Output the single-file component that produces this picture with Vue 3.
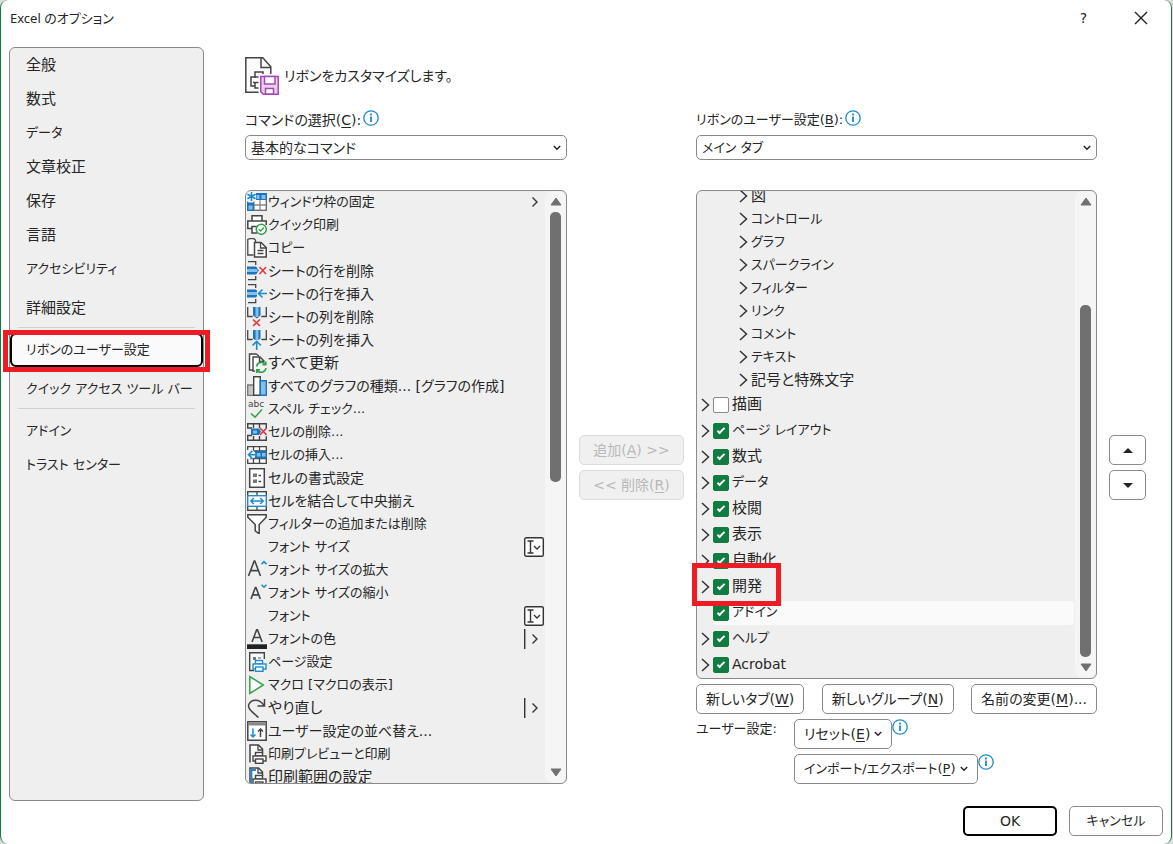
<script setup>
import { ref } from 'vue'

const sections = [
  [
    { label: '全般' },
    { label: '数式' },
    { label: 'データ' },
    { label: '文章校正' },
    { label: '保存' },
    { label: '言語' },
    { label: 'アクセシビリティ' },
    { label: '詳細設定', spaced: true },
  ],
  [{ label: 'リボンのユーザー設定', current: true }, { label: 'クイック アクセス ツール バー' }],
  [{ label: 'アドイン' }, { label: 'トラスト センター' }],
]

// Labels that are mostly katakana are set a step smaller than kanji ones.
function sizeOf(label) {
  const letters = label.match(/[ぁ-んァ-ヶー一-龠]/g) || []
  const katakana = letters.filter((ch) => /[ァ-ヶー]/.test(ch)).length
  if (letters.length === 0) return 'mid'
  if (katakana === 0) return 'large'
  return katakana / letters.length > 0.38 ? 'small' : 'mid'
}

const G = '#444'
const B = '#1e8bcd'
const page = `<path d="M3 18.500V1h8.500l4 4v4" fill="#fafafa" stroke="${G}" stroke-width="1.500"/><path d="M11 1v5h4.500" fill="none" stroke="${G}" stroke-width="1.300"/>`
const printer = (c) =>
  `<rect x="8.500" y="8.500" width="7" height="3.500" fill="#fff" stroke="${c}" stroke-width="1.400"/><rect x="6" y="12" width="13" height="5" fill="#fff" stroke="${c}" stroke-width="1.400"/><rect x="8.500" y="15" width="7.500" height="4.300" fill="#fff" stroke="${c}" stroke-width="1.400"/>`
const columns = `<path d="M.7 4v5.500h5M19.300 4v5.500h-5M.7 9V0M19.300 9V0" fill="none" stroke="${G}" stroke-width="1.300"/><path d="M6 0h7.500v8.500l-3.700 3L6 8.500z" fill="#1b75bb"/><path d="M8.500 0h3v10h-3z" fill="#83beec"/>`
const rows = `<path d="M8.700 4V.7H1M8.700 15v3.600H1" fill="none" stroke="${G}" stroke-width="1.300"/><path d="M0 5.500h9l3 4-3 4H0z" fill="#1b75bb"/><path d="M0 8h10.500v3H0z" fill="#83beec"/>`
const letterA = (x, y, s) =>
  `<path d="M${x} ${y}l${s * 0.38}-${s}h.6l${s * 0.38} ${s}M${x + s * 0.14} ${y - s * 0.36}h${s * 0.53}" fill="none" stroke="${G}" stroke-width="1.600"/>`

const icons = {
  freeze: `<rect x=".7" y="2" width="18.600" height="16.300" fill="#fff" stroke="#666" stroke-width="1.300"/><path d="M7 8v10M13 8v10M7 13h12" stroke="#888" stroke-width="1.300"/><path d="M8.500 1H20v7H8.500zM0 10.500h7v8.300H0z" fill="#1b75bb"/><path d="M9.500 3h3v4h-3zM14.500 3h4v4h-4zM1.500 13.500h4v4h-4z" fill="#83beec"/><path d="M0 0h9v9.500H0z" fill="#f4f4f4"/><path d="M4.500 0v9M.4 2.300l8.200 4.500M.4 6.800l8.200-4.500" stroke="${B}" stroke-width="1.600"/>`,
  quickPrint: `<path d="M5 6V.8h10V6M5 13.500H.8V6h18.400v4M4.500 11.500h6M5 11v7h5" fill="#fff" stroke="${G}" stroke-width="1.500"/><circle cx="14.300" cy="14.300" r="5" fill="#fff" stroke="#30a24b" stroke-width="1.500"/><path d="M11.800 14.300l1.800 1.800 3.400-3.600" fill="none" stroke="#30a24b" stroke-width="1.400"/>`,
  copy: `<path d="M6.500 17H.8V1.500L3 .7h4l1.500 1.500V4" fill="#fff" stroke="${G}" stroke-width="1.300"/><path d="M7.500 4.500H14l5.200 5V19H7.500z" fill="#fff" stroke="${G}" stroke-width="1.500"/><path d="M13.500 4.500V10H19M10.500 12.500h6M10.500 15.500h6" fill="none" stroke="${G}" stroke-width="1.300"/>`,
  rowDelete: `${rows}<path d="M12.500 6l6.500 7M19 6l-6.500 7" stroke="#e8383d" stroke-width="1.600"/>`,
  rowInsert: `${rows}<path d="M10 5h10v9H10z" fill="#efefef"/><path d="M20 9.500h-8.500M15.500 5.500l-4 4 4 4" fill="none" stroke="${B}" stroke-width="1.600"/>`,
  colDelete: `${columns}<path d="M6 12.500l7 6.500M13 12.500L6 19" stroke="#e8383d" stroke-width="1.600"/>`,
  colInsert: `${columns}<path d="M5 10h10v10H5z" fill="#efefef"/><path d="M9.700 20v-8.500M5.500 15.500l4.200-4.200 4.200 4.200" fill="none" stroke="${B}" stroke-width="1.600"/>`,
  refresh: `<path d="M6.500 17H2.500V1H9l3 2" fill="#fff" stroke="${G}" stroke-width="1.400"/><path d="M9 18H6V4h7l4.500 4.500M12.500 4v4.500H17" fill="#fff" stroke="${G}" stroke-width="1.400"/><path d="M8 9h12v11H8z" fill="#f4f4f4"/><path d="M9.500 13.500a5 5 0 0 1 9-2M18.800 8.500v3.300h-3.300M19 15a5 5 0 0 1-9 2.300M9.700 20v-3.300H13" fill="none" stroke="#30a24b" stroke-width="1.600"/>`,
  chart: `<path d="M.7 9h6v10.300h-6z" fill="#c8c6c4" stroke="#777" stroke-width="1.300"/><path d="M6.700.7h6.600v18.600H6.700z" fill="#fff" stroke="${G}" stroke-width="1.400"/><path d="M13.300 4.700h6v14.600h-6z" fill="#83beec" stroke="#1b75bb" stroke-width="1.400"/>`,
  spell: `<text x="1" y="8" font-size="9" fill="${G}">abc</text><path d="M4 14.500l4 3.700 7-7.700" fill="none" stroke="#30a24b" stroke-width="1.600"/>`,
  cellDelete: `<path d="M.7 6V1.700h18.600V6M.7 13.500v4.800h18.600v-4M6.500 2v4M12.500 2v4M6.500 14v4M12.500 14v4M0 6h5M0 13.500h5" fill="none" stroke="${G}" stroke-width="1.400"/><path d="M4 6.500h8l2 3.200-2 3.200H4z" fill="#1b75bb"/><path d="M6 8.500h4v3H6z" fill="#83beec"/><path d="M13 6l6.500 7M19.500 6L13 13" stroke="#e8383d" stroke-width="1.600"/>`,
  cellInsert: `<path d="M.7 5V1.700h18.600v16.600H.7V14M6.500 2v4M12.500 2v4M6.500 13v5M12.500 13v5M3 6h16M3 13.500h16" fill="#fff" stroke="${G}" stroke-width="1.300"/><path d="M8 6h12v7.500H8z" fill="#1b75bb"/><path d="M10 8h3.500v3.500H10zM15 8h3.500v3.500H15z" fill="#83beec"/><path d="M0 5h6l3 4.500-3 4H0z" fill="#f4f4f4"/><path d="M10 9.700H1.500M5.500 5.700l-4 4 4 4" fill="none" stroke="${B}" stroke-width="1.600"/>`,
  cellFormat: `<rect x="2.700" y=".7" width="14.600" height="18.600" fill="#fff" stroke="${G}" stroke-width="1.500"/><path d="M6 5.500h4v3.500H6zM6 11.500h4V15H6z" fill="#777"/><path d="M11.500 7.500h2.500M11.500 13.500h2.500" stroke="${G}" stroke-width="1.300"/>`,
  merge: `<rect x=".7" y=".7" width="18.600" height="18.600" fill="#fff" stroke="${G}" stroke-width="1.400"/><path d="M10 1v18" stroke="${G}" stroke-width="1.300"/><rect x=".7" y="4.700" width="18.600" height="10.600" fill="#fff" stroke="${B}" stroke-width="1.400"/><path d="M4 10h12M6.800 7L3.800 10l3 3M13.200 7l3 3-3 3" fill="none" stroke="${B}" stroke-width="1.500"/>`,
  filter: `<path d="M.8.800h18.400v2.500l-7 7.200v9.300l-4-3v-6.300L.8 3.300z" fill="#fff" stroke="${G}" stroke-width="1.500"/>`,
  grow: `${letterA(1.5, 16, 15)}<path d="M14.500 4.200l2.500-2.500 2.500 2.500" fill="none" stroke="${B}" stroke-width="1.600"/>`,
  shrink: `${letterA(4, 16, 11.5)}<path d="M14.500 1.700L17 4.200l2.500-2.500" fill="none" stroke="${B}" stroke-width="1.600"/>`,
  color: `${letterA(5, 13, 12.5)}<path d="M0 15.300h20V20H0z" fill="#222"/>`,
  pageSetup: `<path d="M7 18.500H2.700V.8h14.600V7" fill="#fafafa" stroke="${G}" stroke-width="1.400"/><path d="M6 5h3v3H6z" fill="#777"/><path d="M11 6h3" stroke="#777" stroke-width="1.300"/>${printer(B)}`,
  macro: `<path d="M2.800 1.500v17L16.300 10z" fill="#fff" stroke="#30a24b" stroke-width="1.500"/>`,
  redo: `<path d="M17.500 1v7h-7M17 7.500C12.500 0 4 1 1.800 6.500.500 10.500 4 13 11.500 19.500" fill="none" stroke="${G}" stroke-width="1.500"/>`,
  sort: `<path d="M.8.800h18.400v18.400H.8z" fill="#fff" stroke="${G}" stroke-width="1.500"/><path d="M1 3h18" stroke="#888" stroke-width="3"/><path d="M6 7.500v8.500M3.500 13.500L6 16l2.500-2.500" fill="none" stroke="${B}" stroke-width="1.500"/><path d="M13.500 16V8M11 10.500L13.500 8l2.500 2.500" fill="none" stroke="${G}" stroke-width="1.500"/>`,
  preview: `${page}${printer(G)}`,
  printArea: `${page}<path d="M4.500 19V3H9" fill="none" stroke="${B}" stroke-width="1.800"/>${printer(G)}`,
}

const commands = [
  { icon: 'freeze', label: 'ウィンドウ枠の固定', mark: 'menu' },
  { icon: 'quickPrint', label: 'クイック印刷' },
  { icon: 'copy', label: 'コピー' },
  { icon: 'rowDelete', label: 'シートの行を削除' },
  { icon: 'rowInsert', label: 'シートの行を挿入' },
  { icon: 'colDelete', label: 'シートの列を削除' },
  { icon: 'colInsert', label: 'シートの列を挿入' },
  { icon: 'refresh', label: 'すべて更新' },
  { icon: 'chart', label: 'すべてのグラフの種類... [グラフの作成]' },
  { icon: 'spell', label: 'スペル チェック...' },
  { icon: 'cellDelete', label: 'セルの削除...' },
  { icon: 'cellInsert', label: 'セルの挿入...' },
  { icon: 'cellFormat', label: 'セルの書式設定' },
  { icon: 'merge', label: 'セルを結合して中央揃え' },
  { icon: 'filter', label: 'フィルターの追加または削除' },
  { label: 'フォント サイズ', mark: 'combo' },
  { icon: 'grow', label: 'フォント サイズの拡大' },
  { icon: 'shrink', label: 'フォント サイズの縮小' },
  { label: 'フォント', mark: 'combo' },
  { icon: 'color', label: 'フォントの色', mark: 'split' },
  { icon: 'pageSetup', label: 'ページ設定' },
  { icon: 'macro', label: 'マクロ [マクロの表示]' },
  { icon: 'redo', label: 'やり直し', mark: 'split' },
  { icon: 'sort', label: 'ユーザー設定の並べ替え...' },
  { icon: 'preview', label: '印刷プレビューと印刷' },
  { icon: 'printArea', label: '印刷範囲の設定' },
]

const groups = ['図', 'コントロール', 'グラフ', 'スパークライン', 'フィルター', 'リンク', 'コメント', 'テキスト', '記号と特殊文字']

const tabs = ref([
  { label: '描画', on: false },
  { label: 'ページ レイアウト', on: true },
  { label: '数式', on: true },
  { label: 'データ', on: true },
  { label: '校閲', on: true },
  { label: '表示', on: true },
  { label: '自動化', on: true },
  { label: '開発', on: true, marked: true },
  { label: 'アドイン', on: true, leaf: true },
  { label: 'ヘルプ', on: true },
  { label: 'Acrobat', on: true },
])

const customActions = [
  { label: 'リセット', key: 'E', size: 'mid' },
  { label: 'インポート/エクスポート', key: 'P', size: 'small' },
]
</script>

<template>
  <div class="dialog">
    <header class="titlebar">
      <h1>Excel のオプション</h1>
      <button class="caption" aria-label="ヘルプ">?</button>
      <button class="caption" aria-label="閉じる">
        <svg width="14" height="14" viewBox="0 0 14 14"><path d="M1 1l12 12M13 1L1 13" stroke="#222" stroke-width="1.400" /></svg>
      </button>
    </header>

    <div class="body">
      <nav class="sidebar">
        <ul v-for="(section, i) in sections" :key="i">
          <li v-for="item in section" :key="item.label" :class="{ spaced: item.spaced, marked: item.current }">
            <button class="nav-item" :class="[sizeOf(item.label), { current: item.current }]">{{ item.label }}</button>
          </li>
        </ul>
      </nav>

      <main class="main">
        <div class="heading">
          <svg width="34" height="38" viewBox="0 0 34 38">
            <path d="M.8.800h17l8 9V35.200H.8z" fill="#fafafa" stroke="#444" stroke-width="1.500" />
            <path d="M16 1v9.500h9.500" fill="none" stroke="#444" stroke-width="1.500" />
            <path d="M10 21v-6h8v6M10 29H6v-9h16M8 25.500h7M10 25v6h5" fill="#fff" stroke="#444" stroke-width="1.500" />
            <path d="M13.500 17H34v21H13.500z" fill="#fafafa" />
            <path d="M15.800 19.500h17.400v17.700H18.500l-2.700-2.500z" fill="#ecd0ef" stroke="#a347b3" stroke-width="1.500" />
            <path d="M19.500 19.500h10.500v7.500H19.500zM20.500 37v-5.500h8V37z" fill="#fff" stroke="#a347b3" stroke-width="1.500" />
          </svg>
          <h2>リボンをカスタマイズします。</h2>
        </div>

        <div class="columns">
          <section class="column commands">
            <div class="field-label">
              <label for="command-source">コマンドの選択(<u>C</u>):</label>
              <svg class="info" width="16" height="16" viewBox="0 0 16 16"><circle cx="8" cy="8" r="7.200" fill="#fff" stroke="#1e8bcd" stroke-width="1.300" /><path d="M8 3.500v2M8 6.500v5.500" stroke="#1e8bcd" stroke-width="1.800" /></svg>
            </div>
            <div class="select">
              <select id="command-source"><option>基本的なコマンド</option></select>
              <svg width="8" height="6" viewBox="0 0 8 6"><path d="M.8 1l3.200 3.200L7.200 1" fill="none" stroke="#222" stroke-width="1.500" /></svg>
            </div>
            <div class="list">
              <ul class="items">
                <li v-for="c in commands" :key="c.label" class="command">
                  <svg width="20" height="20" viewBox="0 0 20 20" v-html="icons[c.icon] || ''"></svg>
                  <span class="name" :class="sizeOf(c.label)">{{ c.label }}</span>
                  <svg v-if="c.mark" width="20" height="20" viewBox="0 0 20 20" fill="none" stroke="#333" stroke-width="1.400">
                    <template v-if="c.mark === 'combo'">
                      <rect x=".7" y=".7" width="18.600" height="18.600" rx="1.500" fill="#fff" />
                      <path d="M3.500 4h6M3.500 16h6M6.500 4v12M10 9l3 3 3-3" />
                    </template>
                    <path v-else d="M8.500 5.500L13 10l-4.500 4.500" />
                    <path v-if="c.mark === 'split'" d="M.7 0v20" />
                  </svg>
                </li>
              </ul>
              <div class="scrollbar">
                <svg width="12" height="9" viewBox="0 0 12 9"><path d="M6 1l5 7H1z" fill="#707070" stroke="#707070" stroke-linejoin="round" /></svg>
                <div class="track"><div class="thumb upper"></div></div>
                <svg width="12" height="9" viewBox="0 0 12 9"><path d="M6 8L1 1h10z" fill="#707070" stroke="#707070" stroke-linejoin="round" /></svg>
              </div>
            </div>
          </section>

          <div class="transfer">
            <button class="btn" disabled>追加(<u>A</u>) &gt;&gt;</button>
            <button class="btn" disabled>&lt;&lt; 削除(<u>R</u>)</button>
          </div>

          <section class="column ribbon">
            <div class="field-label">
              <label for="ribbon-target" class="small">リボンのユーザー設定(<u>B</u>):</label>
              <svg class="info" width="16" height="16" viewBox="0 0 16 16"><circle cx="8" cy="8" r="7.200" fill="#fff" stroke="#1e8bcd" stroke-width="1.300" /><path d="M8 3.500v2M8 6.500v5.500" stroke="#1e8bcd" stroke-width="1.800" /></svg>
            </div>
            <div class="select">
              <select id="ribbon-target" class="small"><option>メイン タブ</option></select>
              <svg width="8" height="6" viewBox="0 0 8 6"><path d="M.8 1l3.200 3.200L7.200 1" fill="none" stroke="#222" stroke-width="1.500" /></svg>
            </div>
            <div class="list tree">
              <div class="items scrolled">
                <ul>
                  <li v-for="g in groups" :key="g" class="group">
                    <svg width="9" height="14" viewBox="0 0 9 14"><path d="M1 1l6.500 6L1 13" fill="none" stroke="#333" stroke-width="1.500" /></svg>
                    <span :class="sizeOf(g)">{{ g }}</span>
                  </li>
                </ul>
                <ul>
                  <li v-for="t in tabs" :key="t.label" class="tab" :class="{ target: t.marked }">
                    <svg width="9" height="14" viewBox="0 0 9 14"><path v-if="!t.leaf" d="M1 1l6.500 6L1 13" fill="none" stroke="#333" stroke-width="1.500" /></svg>
                    <label :class="{ highlighted: t.leaf }"><input v-model="t.on" type="checkbox" /><span :class="sizeOf(t.label)">{{ t.label }}</span></label>
                  </li>
                </ul>
              </div>
              <div class="scrollbar">
                <svg width="12" height="9" viewBox="0 0 12 9"><path d="M6 1l5 7H1z" fill="#707070" stroke="#707070" stroke-linejoin="round" /></svg>
                <div class="track end"><div class="thumb lower"></div></div>
                <svg width="12" height="9" viewBox="0 0 12 9"><path d="M6 8L1 1h10z" fill="#707070" stroke="#707070" stroke-linejoin="round" /></svg>
              </div>
            </div>
            <div class="tab-actions">
              <button class="btn">新しいタブ(<u>W</u>)</button>
              <button class="btn">新しいグループ(<u>N</u>)</button>
              <button class="btn">名前の変更(<u>M</u>)...</button>
            </div>
            <div class="custom">
              <span class="custom-label small">ユーザー設定:</span>
              <div class="custom-actions">
                <div v-for="a in customActions" :key="a.key" class="custom-row">
                  <button class="btn" :class="a.size">
                    {{ a.label }}(<u>{{ a.key }}</u>)
                    <svg width="8" height="6" viewBox="0 0 8 6"><path d="M.8 1l3.200 3.200L7.200 1" fill="none" stroke="#222" stroke-width="1.400" /></svg>
                  </button>
                  <svg width="16" height="16" viewBox="0 0 16 16"><circle cx="8" cy="8" r="7.200" fill="#fff" stroke="#1e8bcd" stroke-width="1.300" /><path d="M8 3.500v2M8 6.500v5.500" stroke="#1e8bcd" stroke-width="1.800" /></svg>
                </div>
              </div>
            </div>
          </section>

          <div class="order">
            <button class="btn" aria-label="上へ"><svg width="10" height="5" viewBox="0 0 10 5"><path d="M5 0l5 5H0z" fill="#222" /></svg></button>
            <button class="btn" aria-label="下へ"><svg width="10" height="5" viewBox="0 0 10 5"><path d="M5 5L0 0h10z" fill="#222" /></svg></button>
          </div>
        </div>
      </main>
    </div>

    <footer class="footer">
      <button class="btn default">OK</button>
      <button class="btn small">キャンセル</button>
    </footer>
  </div>
</template>

<style>
body {
  background: #dcdcdc;
}
</style>

<style scoped>
.dialog {
  box-sizing: border-box;
  display: flex;
  flex-direction: column;
  height: 100vh;
  min-height: 640px;
  margin-right: 1px;
  border: 1px solid #107c41;
  border-width: 0 1px;
  border-radius: 8px;
  background: #fff;
  color: #262626;
  font-family: 'DejaVu Sans', 'Noto Sans CJK JP', sans-serif;
  font-size: 14px;
  font-feature-settings: 'palt';
  line-height: 20px;
  white-space: nowrap;
}
.dialog * {
  box-sizing: border-box;
}
h1,
h2,
ul {
  margin: 0;
  padding: 0;
  font-weight: 400;
  list-style: none;
}
svg {
  display: block;
  flex: none;
}
button,
select {
  color: inherit;
  font: inherit;
  font-feature-settings: inherit;
}
u {
  text-underline-offset: 2px;
}
.small {
  font-size: 13px;
}
.mid {
  font-size: 14px;
}
.large {
  font-size: 15px;
}

.titlebar {
  display: flex;
  align-items: center;
  height: 36px;
  padding: 0 2px 0 9px;
}
.titlebar h1 {
  flex: 1;
  font-family: 'Noto Sans', 'Noto Sans CJK JP', sans-serif;
  font-size: 13px;
}
.caption {
  display: grid;
  place-items: center;
  width: 57px;
  height: 36px;
  padding: 0;
  border: 0;
  background: none;
}

.body {
  display: flex;
  flex: 1;
  min-height: 0;
  padding: 11px 25px 0 8px;
}
.sidebar {
  flex: none;
  width: 195px;
  border: 1px solid #8a8a8a;
  border-radius: 6px;
  background: #efefef;
}
.sidebar ul + ul::before {
  content: '';
  display: block;
  height: 1px;
  margin: 2px 8px 5px;
  background: #d0d0d0;
}
.sidebar li {
  position: relative;
}
.sidebar .spaced {
  margin-top: 5px;
}
.sidebar .marked {
  margin-bottom: 5px;
}
.nav-item {
  display: block;
  width: 100%;
  height: 34px;
  padding: 0 16px;
  border: 0;
  background: none;
  text-align: left;
}
.nav-item.current {
  padding: 0 14px;
  border: 2px solid #000;
  border-radius: 6px;
  background: #fafafa;
}
.marked::after {
  content: '';
  position: absolute;
  inset: -3px -7px -5px;
  border: 5px solid #ed1c24;
}

.main {
  display: flex;
  flex: 1;
  flex-direction: column;
  min-width: 0;
  padding: 10px 0 17px 41px;
}
.heading {
  display: flex;
  align-items: center;
  gap: 5px;
  height: 38px;
}
.heading h2 {
  font-size: 14px;
}
.columns {
  display: flex;
  flex: 1;
  gap: 12px;
  min-height: 0;
  padding-top: 14px;
}
.column {
  display: flex;
  flex-direction: column;
  min-width: 0;
}
.commands {
  flex: 322 1 0;
}
.ribbon {
  flex: 401 1 0;
}
.field-label {
  display: flex;
  gap: 2px;
  height: 26px;
}
.field-label label {
  line-height: 22px;
}
.info {
  margin-top: 1px;
}
.select {
  position: relative;
}
.select select {
  display: block;
  width: 100%;
  height: 25px;
  padding: 0 24px 0 5px;
  border: 1px solid #8a8a8a;
  border-radius: 5px;
  background: #fff;
  appearance: none;
}
.select svg {
  position: absolute;
  top: 10px;
  right: 6px;
  pointer-events: none;
}
.list {
  display: flex;
  flex: 1;
  min-height: 0;
  margin-top: 30px;
  border: 1px solid #8a8a8a;
  border-radius: 6px;
  background: #efefef;
  overflow: hidden;
}
.tree {
  overflow: visible clip;
}
.items {
  flex: 1;
  min-width: 0;
}
.command {
  display: flex;
  align-items: center;
  gap: 1px;
  height: 23px;
  padding: 0 1px 1px;
}
.name {
  flex: 1;
}
.scrollbar {
  display: flex;
  flex: none;
  flex-direction: column;
  align-items: center;
  width: 21px;
  padding: 6px 0;
  border-radius: 8px;
  background: #f5f5f5;
}
.track {
  display: flex;
  flex: 1;
  flex-direction: column;
  margin: 6px 0;
}
.track.end {
  justify-content: flex-end;
}
.thumb {
  width: 11px;
  border-radius: 5px;
  background: #707070;
}
.thumb.upper {
  height: 49%;
}
.thumb.lower {
  height: 79%;
}

.scrolled {
  margin-top: -6px;
}
.group,
.tab {
  display: flex;
  align-items: center;
}
.group {
  gap: 3px;
  height: 23px;
  padding: 0 0 2px 42px;
}
.tab {
  position: relative;
  gap: 3px;
  height: 26px;
  padding-left: 4px;
}
.tab label {
  display: flex;
  flex: 1;
  align-items: center;
  gap: 3px;
  height: 24px;
}
.tab label span {
  padding-bottom: 3px;
  line-height: 18px;
}
.highlighted {
  margin-right: 1px;
  border-radius: 4px;
  background: #fafafa;
}
.tab input {
  flex: none;
  width: 16px;
  height: 16px;
  margin: 0;
  border: 1px solid #8a8a8a;
  border-radius: 2px;
  background: #fff;
  appearance: none;
}
.tab input:checked {
  border-color: #107c41;
  background: #107c41;
}
.tab input:checked::before {
  content: '';
  display: block;
  width: 6px;
  height: 2px;
  margin: 4px 0 0 3px;
  border: 1px solid #fff;
  border-width: 0 0 2px 2px;
  transform: rotate(-45deg);
}
.target::after {
  content: '';
  position: absolute;
  top: -11px;
  bottom: -6px;
  left: -5px;
  z-index: 1;
  width: 79px;
  border: 5px solid #ed1c24;
}

.btn {
  display: inline-flex;
  align-items: center;
  justify-content: center;
  height: 30px;
  padding: 0 9px;
  border: 1px solid #8a8a8a;
  border-radius: 5px;
  background: #fff;
}
.btn:disabled {
  border-color: #dcdcdc;
  background: #f0f0f0;
  color: #b8b8b8;
}
.btn svg {
  margin-left: 4px;
}
.transfer,
.order {
  display: flex;
  flex: none;
  flex-direction: column;
  gap: 5px;
  justify-content: center;
  padding: 50px 0 8px;
}
.transfer {
  width: 105px;
}
.transfer .btn {
  white-space: pre;
}
.order {
  width: 37px;
}
.order .btn {
  padding: 0;
}
.order .btn svg {
  margin: 0;
}
.tab-actions {
  display: flex;
  justify-content: space-between;
  margin-top: 5px;
}
.custom {
  display: flex;
  gap: 12px;
  margin-top: 5px;
}
.custom-label {
  width: 86px;
}
.custom-actions {
  display: flex;
  flex-direction: column;
  gap: 5px;
}
.custom-row {
  display: flex;
}

.footer {
  display: flex;
  justify-content: flex-end;
  gap: 12px;
  padding: 5px 8px 8px;
}
.footer .btn {
  width: 94px;
}
.footer .default {
  border: 2px solid #000;
}
</style>
